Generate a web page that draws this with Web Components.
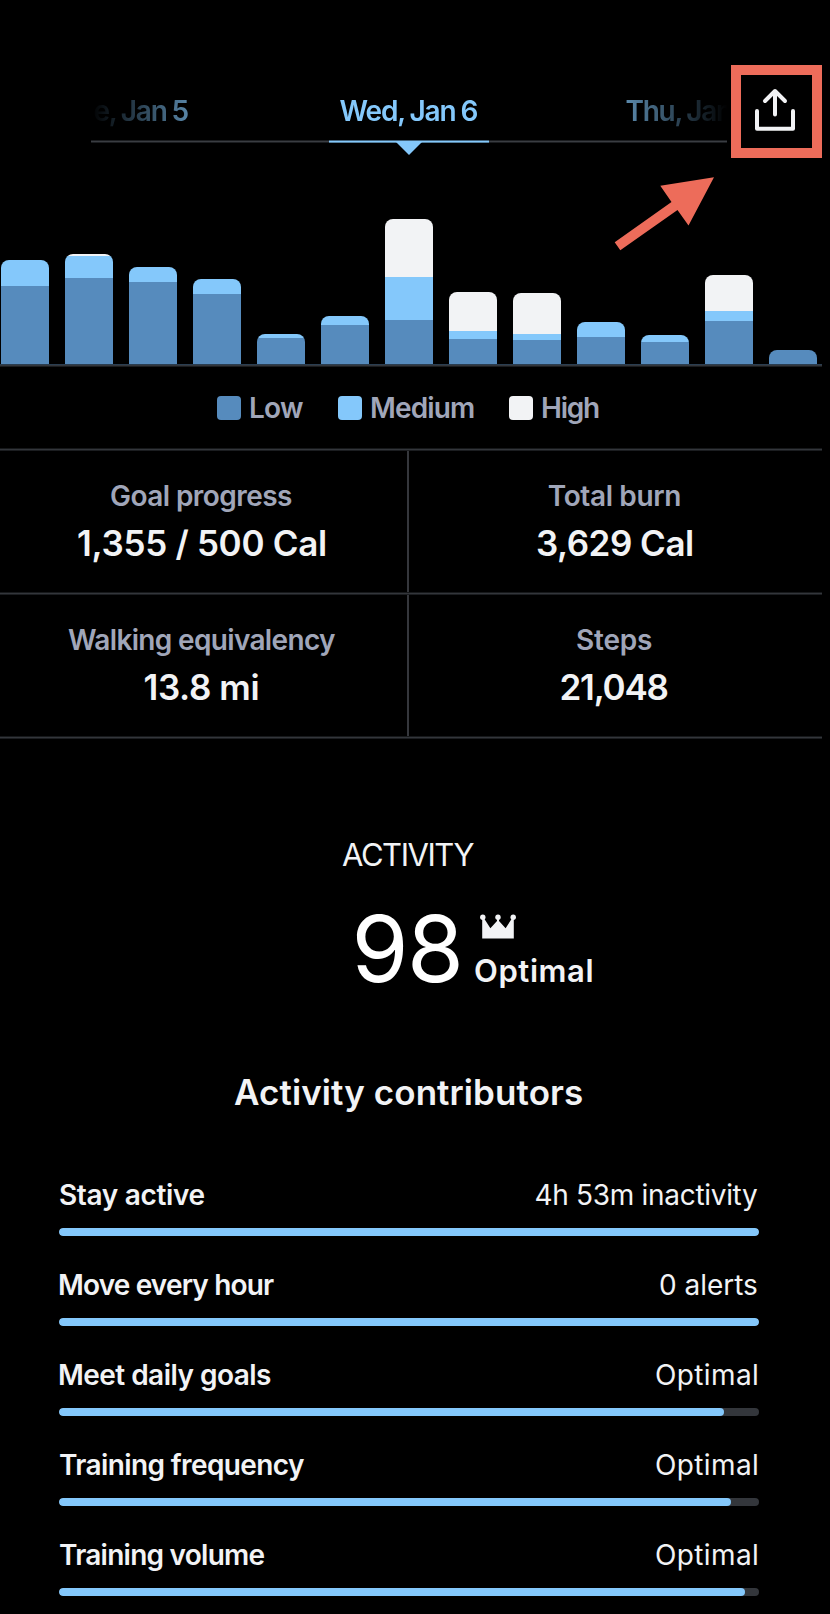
<!DOCTYPE html>
<html lang="en">
<head>
<meta charset="utf-8">
<title>Activity</title>
<style>
    body {
        margin: 0;
        background: #000;
        font-family: Inter, "Liberation Sans", sans-serif;
    }
</style>
</head>
<body>
<activity-app></activity-app>

<script>
class BaseElement extends HTMLElement {
    constructor() {
        super();
        this.attachShadow({ mode: "open" });
    }

    connectedCallback() {
        const template = document.createElement("template");
        template.innerHTML = `<style>${this.css()}</style>${this.html()}`;
        this.shadowRoot.replaceChildren(template.content.cloneNode(true));
    }

    num(name, fallback = 0) {
        return Number(this.getAttribute(name) ?? fallback);
    }
}

// One line of text, tracked so that its ink fills the given width
class TextLine extends BaseElement {
    css() {
        const size = this.num("size", 28);
        const weight = this.num("weight", 600);
        const word = this.num("word");
        const text = this.textContent;
        const ctx = document.createElement("canvas").getContext("2d");
        ctx.font = `${weight} ${size}px Inter, "Liberation Sans", sans-serif`;
        const m = ctx.measureText(text);
        const ink = m.actualBoundingBoxLeft + m.actualBoundingBoxRight + word * (text.split(" ").length - 1);
        const width = this.num("width", ink);
        const spacing = (width - ink) / (text.length - 1);

        return `:host {
            display: block;
            flex: none;
            width: ${width}px;
            font-size: ${size}px;
            font-weight: ${weight};
            line-height: ${this.num("line", size + 8)}px;
            letter-spacing: ${spacing.toFixed(3)}px;
            word-spacing: ${word}px;
            text-indent: ${m.actualBoundingBoxLeft.toFixed(2)}px;
            white-space: nowrap;
        }`;
    }

    html() {
        return `<slot></slot>`;
    }
}

class DateStrip extends BaseElement {
    css() {
        return `:host {
            display: block;
            width: 636px;
            padding-top: 28px;
            color: #84c8fb;
        }
        .dates {
            display: flex;
            padding-left: 3.5px;
            overflow: hidden;
            -webkit-mask-image: linear-gradient(to right, transparent, #000 147px, #000 489px, transparent);
            mask-image: linear-gradient(to right, transparent, #000 147px, #000 489px, transparent);
        }
        .current { margin: 0 148.5px 0 150.5px; }
        .track {
            display: grid;
            grid-template-columns: 238px 160px 1fr;
            margin-top: 11px;
        }
        .line {
            height: 3px;
            background: linear-gradient(#1b1d20 1px, #3a3d42 1px 2px, #1b1d20 2px);
        }
        .on { background: linear-gradient(#42647e 1px, #84c8fb 1px 2px, #54809f 2px); }
        .pointer {
            width: 26px;
            height: 13px;
            margin: -1px auto 0;
            background: #84c8fb;
            clip-path: polygon(0 0, 100% 0, 50% 100%);
        }`;
    }

    html() {
        return `<div class="dates">
            <text-line word="-1" width="94.5">e, Jan 5</text-line>
            <text-line word="-1" width="138.5" class="current">Wed, Jan 6</text-line>
            <text-line word="-1" width="106">Thu, Jan</text-line>
        </div>
        <div class="track">
            <div class="line"></div>
            <div><div class="line on"></div><div class="pointer"></div></div>
            <div class="line"></div>
        </div>`;
    }
}

class ShareButton extends BaseElement {
    css() {
        return `:host {
            display: block;
            box-sizing: border-box;
            width: 91px;
            height: 93px;
            border: 10px solid #ed6c5a;
        }
        svg { display: block; }`;
    }

    html() {
        return `<svg width="71" height="73" viewBox="741 75 71 73" fill="none" stroke="#f2f3f5" stroke-width="4" stroke-linecap="round" stroke-linejoin="round">
            <path d="M757 111V128.7H793V111"/>
            <path d="M775 114.5V91M765 101L775 91L785 101"/>
        </svg>`;
    }
}

class StackedBar extends BaseElement {
    css() {
        return `:host {
            display: flex;
            flex-direction: column;
            width: 48px;
            border-radius: 8px 8px 0 0;
            overflow: hidden;
        }
        .high { height: ${this.num("high")}px; background: #f2f3f5; }
        .medium { height: ${this.num("medium")}px; background: #84c8fb; }
        .low { height: ${this.num("low")}px; background: #568bbd; }`;
    }

    html() {
        return `<div class="high"></div><div class="medium"></div><div class="low"></div>`;
    }
}

class ActivityChart extends BaseElement {
    // [low, medium, high] heights
    bars = [
        [78, 26, 0], [86, 22, 2], [82, 15, 0], [70, 15, 0], [26, 4, 0],
        [39, 9, 0], [44, 43, 58], [25, 8, 39], [24, 6, 41], [27, 15, 0],
        [22, 7, 0], [43, 10, 36], [14, 0, 0]
    ];

    css() {
        return `:host { display: block; }
        .bars {
            display: flex;
            align-items: flex-end;
            gap: 16px;
            height: 206px;
            padding-left: 1px;
        }
        .axis {
            height: 3px;
            background: linear-gradient(#2a3d50 1px, #33363b 1px 2px, #1b1d20 2px);
        }`;
    }

    html() {
        const bars = this.bars.map(([low, medium, high]) =>
            `<stacked-bar low="${low}" medium="${medium}" high="${high}"></stacked-bar>`);
        return `<div class="bars">${bars.join("")}</div><div class="axis"></div>`;
    }
}

class LegendItem extends BaseElement {
    css() {
        return `:host {
            display: flex;
            align-items: center;
            gap: 10px;
            color: #a0a6b9;
        }
        i {
            width: 24px;
            height: 24px;
            border-radius: 4px;
            background: ${this.getAttribute("color")};
        }`;
    }

    html() {
        return `<i></i><slot></slot>`;
    }
}

class StatCell extends BaseElement {
    css() {
        return `:host {
            display: flex;
            flex-direction: column;
            align-items: center;
            gap: 7px;
            box-sizing: border-box;
            height: 141px;
            padding-top: 27px;
            color: #f2f3f5;
        }
        ::slotted([slot=label]) { color: #a0a6b9; }`;
    }

    html() {
        return `<slot name="label"></slot><slot></slot>`;
    }
}

class StatGrid extends BaseElement {
    css() {
        return `:host {
            display: block;
            background: linear-gradient(#35373c, #35373c) 407px 1px / 2px 287px no-repeat;
        }
        .rule {
            height: 3px;
            background: linear-gradient(#16181a 1px, #33363b 1px 2px, #1b1d20 2px);
        }
        .row {
            display: grid;
            grid-template-columns: 403px 413px;
            column-gap: 5px;
        }`;
    }

    html() {
        return `<div class="rule"></div>
        <div class="row">
            <stat-cell><text-line slot="label" width="181">Goal progress</text-line><text-line size="35" line="44" width="247">1,355 / 500 Cal</text-line></stat-cell>
            <stat-cell><text-line slot="label" width="131.5">Total burn</text-line><text-line size="35" line="44" width="155">3,629 Cal</text-line></stat-cell>
        </div>
        <div class="rule"></div>
        <div class="row">
            <stat-cell><text-line slot="label" width="267">Walking equivalency</text-line><text-line size="35" line="44" width="114">13.8 mi</text-line></stat-cell>
            <stat-cell><text-line slot="label" width="75">Steps</text-line><text-line size="35" line="44" width="106">21,048</text-line></stat-cell>
        </div>
        <div class="rule"></div>`;
    }
}

class ActivityScore extends BaseElement {
    css() {
        return `:host {
            display: block;
            color: #f2f3f5;
        }
        .heading { margin: 96px 0 0 342px; }
        .score {
            display: flex;
            gap: 16px;
            height: 96px;
            margin: 27px 0 0 356.5px;
        }
        .number { color: #fff; }
        svg { display: block; margin: 12px 0 12px 5px; }`;
    }

    html() {
        return `<text-line size="31" line="40" weight="400" width="132.5" class="heading">ACTIVITY</text-line>
        <div class="score">
            <text-line size="92" line="94" weight="400" width="102.5" class="number">98</text-line>
            <div>
                <svg width="36" height="25" viewBox="0 0 36 25" fill="#f2f3f5">
                    <circle cx="2.8" cy="3.2" r="2.7"/>
                    <circle cx="18" cy="3.2" r="2.7"/>
                    <circle cx="33.2" cy="3.2" r="2.7"/>
                    <path d="M2.2 24.5V4H3.8L10.4 14.3L17 7V4H19V7L25.6 14.3L32.2 4H33.8V24.5Z"/>
                </svg>
                <text-line size="31" line="40" width="117.5">Optimal</text-line>
            </div>
        </div>`;
    }
}

class ContributorRow extends BaseElement {
    css() {
        return `:host { display: block; color: #f2f3f5; }
        .texts { display: flex; justify-content: space-between; padding: 0 2px 0 1px; }
        .track {
            height: 8px;
            margin-top: 15px;
            border-radius: 4px;
            background: #33363b;
            overflow: hidden;
        }
        .fill {
            width: ${this.num("value")}%;
            height: 100%;
            border-radius: 4px;
            background: #84c8fb;
        }`;
    }

    html() {
        return `<div class="texts"><slot name="name"></slot><slot></slot></div>
        <div class="track"><div class="fill"></div></div>`;
    }
}

class PointerArrow extends BaseElement {
    css() {
        return `:host { display: block; }
        svg { display: block; }`;
    }

    html() {
        return `<svg width="100" height="75" viewBox="614 176 100 75" fill="#ed6c5a">
            <path d="M714 177.3L688.5 225.5L677.5 210L620.3 250.3L614.7 242.2L671.5 202L660.3 185.8Z"/>
        </svg>`;
    }
}

class ActivityApp extends BaseElement {
    css() {
        return `:host {
            display: block;
            position: relative;
            width: 822px;
            height: 1614px;
            overflow: hidden;
        }
        header {
            display: flex;
            gap: 4px;
            height: 93px;
            padding: 65px 0 0 91px;
        }
        pointer-arrow {
            position: absolute;
            left: 614px;
            top: 176px;
        }
        .legend {
            display: flex;
            gap: 35px;
            margin: 23px 0 22px 217px;
        }
        .title { margin: 72px 0 63px 234px; color: #f2f3f5; }
        .contributors {
            display: flex;
            flex-direction: column;
            gap: 31px;
            width: 700px;
            margin-left: 59px;
        }`;
    }

    html() {
        return `<header>
            <date-strip></date-strip>
            <share-button></share-button>
        </header>
        <activity-chart></activity-chart>
        <pointer-arrow></pointer-arrow>
        <div class="legend">
            <legend-item color="#568bbd"><text-line width="52">Low</text-line></legend-item>
            <legend-item color="#84c8fb"><text-line width="102">Medium</text-line></legend-item>
            <legend-item color="#f2f3f5"><text-line width="56">High</text-line></legend-item>
        </div>
        <stat-grid></stat-grid>
        <activity-score></activity-score>
        <text-line size="35" line="44" width="348" class="title">Activity contributors</text-line>
        <div class="contributors">
            <contributor-row value="100"><text-line slot="name" width="144.5">Stay active</text-line><text-line weight="400" width="221.5">4h 53m inactivity</text-line></contributor-row>
            <contributor-row value="100"><text-line slot="name" width="214">Move every hour</text-line><text-line weight="400" width="97">0 alerts</text-line></contributor-row>
            <contributor-row value="95"><text-line slot="name" width="211">Meet daily goals</text-line><text-line weight="400" width="101">Optimal</text-line></contributor-row>
            <contributor-row value="96"><text-line slot="name" width="244">Training frequency</text-line><text-line weight="400" width="101">Optimal</text-line></contributor-row>
            <contributor-row value="98"><text-line slot="name" width="204.5">Training volume</text-line><text-line weight="400" width="101">Optimal</text-line></contributor-row>
        </div>`;
    }
}

window.customElements.define("text-line", TextLine);
window.customElements.define("date-strip", DateStrip);
window.customElements.define("share-button", ShareButton);
window.customElements.define("stacked-bar", StackedBar);
window.customElements.define("activity-chart", ActivityChart);
window.customElements.define("legend-item", LegendItem);
window.customElements.define("stat-cell", StatCell);
window.customElements.define("stat-grid", StatGrid);
window.customElements.define("activity-score", ActivityScore);
window.customElements.define("contributor-row", ContributorRow);
window.customElements.define("pointer-arrow", PointerArrow);
window.customElements.define("activity-app", ActivityApp);
</script>
</body>
</html>
